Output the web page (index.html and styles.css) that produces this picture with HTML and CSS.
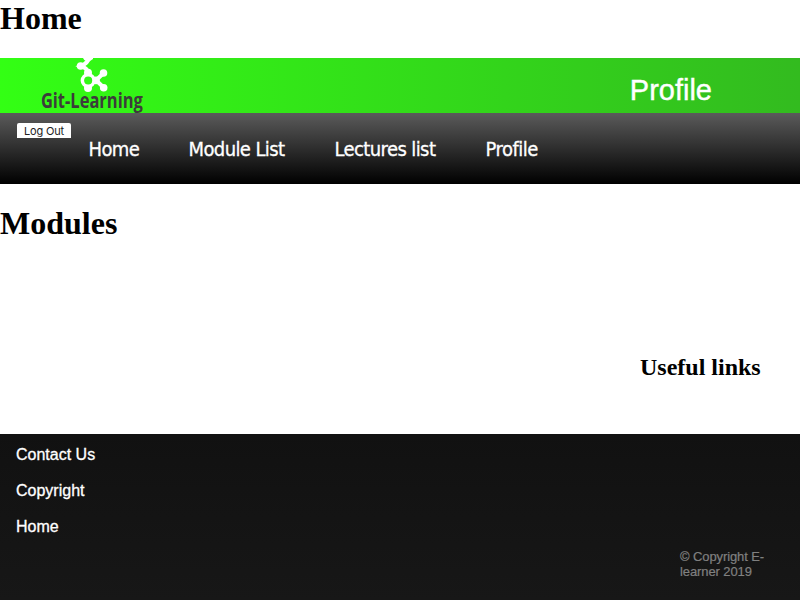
FILE: index.html
```html
<!DOCTYPE html>
<html lang="en">
<head>
<meta charset="utf-8">
<title>Home</title>
<link rel="stylesheet" href="styles.css">
</head>
<body>
<h1 class="page-title">Home</h1>
<header class="banner">
  <svg class="logo" width="110" height="64" viewBox="0 0 110 64" role="img" aria-label="Git-Learning">
    <g fill="none" stroke="#fff" stroke-width="4" stroke-linecap="round">
      <path d="M50 0Q49 5 42 8Q48 10 49.5 15M64.7 15L57 22.3L64.9 29.8"/>
      <circle cx="49.2" cy="22.5" r="5.6"/>
    </g>
    <g fill="#fff">
      <path d="M44 0H54V1Q51 3.5 48 3.5Q45 3 44 0Z"/>
      <circle cx="41.6" cy="8" r="3.8"/>
      <circle cx="49" cy="14.8" r="4"/><circle cx="64.5" cy="15" r="3.8"/>
      <circle cx="49" cy="30" r="4"/><circle cx="64.7" cy="29.8" r="3.8"/>
      <circle cx="57" cy="22.4" r="3.8"/>
    </g>
    <circle cx="49.2" cy="22.5" r="4" fill="#32f816"/>
    <text class="logo-text" x="1.9" y="50" textLength="102" lengthAdjust="spacingAndGlyphs">Git-Learning</text>
  </svg>
  <span class="banner-title">Profile</span>
</header>
<nav class="menu">
  <button class="logout">Log Out</button>
  <a class="item home">Home</a>
  <a class="item modules">Module List</a>
  <a class="item lectures">Lectures list</a>
  <a class="item profile">Profile</a>
</nav>
<main class="content">
  <h1 class="section-title">Modules</h1>
  <h2 class="links-title">Useful links</h2>
</main>
<footer class="footer">
  <a>Contact Us</a>
  <a>Copyright</a>
  <a>Home</a>
  <p class="legal">© Copyright E-<br>learner 2019</p>
</footer>
</body>
</html>
```
FILE: styles.css
```css
* { box-sizing: border-box; }
body { margin: 0; height: 600px; overflow: hidden; display: flex; flex-direction: column; background: #fff; color: #000; font-family: "Liberation Serif", serif; }
h1, h2, p { margin: 0; }
.page-title { height: 58px; font-size: 32px; line-height: 36px; }
.banner { height: 55px; display: flex; align-items: flex-start; justify-content: space-between; padding: 0 88px 0 39px; background: linear-gradient(to right, #33ff14, #33bb1f); font-family: "Liberation Sans", sans-serif; }
.logo { flex: none; position: relative; overflow: visible; }
.logo-text { font: 700 20.5px "Open Sans", sans-serif; fill: #3c3c3b; }
.banner-title { color: #fff; font-size: 29px; line-height: 32px; margin-top: 16px; -webkit-text-stroke: 0.4px #fff; }
.menu { height: 71px; display: flex; align-items: flex-start; padding-left: 17px; background: linear-gradient(#5b5b5b, #000); }
.logout { width: 54px; height: 15px; margin: 10px 17.5px 0 0; padding: 1px 0 0; border: 0; border-radius: 2px 2px 0 0; background: #fff; color: #222; font: 11px/15px Inter, sans-serif; letter-spacing: -0.15px; }
.item { margin: 24px 50px 0 0; color: #fff; font: 20px/24px "DejaVu Sans Condensed", "DejaVu Sans", sans-serif; font-stretch: condensed; letter-spacing: -0.6px; white-space: nowrap; -webkit-text-stroke: 0.3px #fff; }
.home { width: 50px; }
.modules { width: 96px; }
.lectures { width: 101px; }
.profile { width: 53px; letter-spacing: -0.5px; }
.content { height: 250px; display: flex; flex-direction: column; }
.section-title { padding-top: 21px; font-size: 32px; line-height: 36px; }
.links-title { margin: 112px 0 0 640px; font-size: 24px; line-height: 28px; }
.footer { flex: 1; display: flex; flex-direction: column; padding: 12px 16px 0; background: linear-gradient(#111, #171717); color: #fff; font: 16px/18px "Liberation Sans", sans-serif; }
.footer a { margin-bottom: 18px; -webkit-text-stroke: 0.3px #fff; }
.legal { margin: -5px 0 0 664px; color: #808080; font-size: 13px; line-height: 15px; letter-spacing: -0.1px; -webkit-text-stroke: 0.2px #808080; }
```
